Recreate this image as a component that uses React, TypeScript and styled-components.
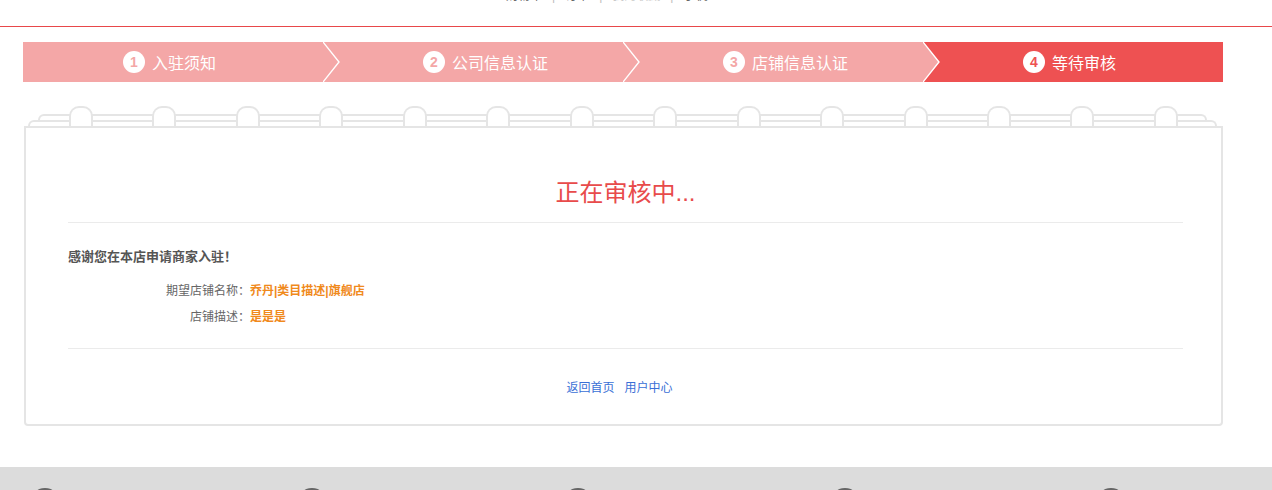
import React from "react";
import styled, { createGlobalStyle } from "styled-components";

const GlobalStyle = createGlobalStyle`
  body {
    margin: 0;
    background: #fff;
    font-family: "Liberation Sans", "Noto Sans CJK SC", sans-serif;
    overflow: hidden;
  }
`;

const TopBar = styled.div`
  height: 26px;
  border-bottom: 1px solid #e8474a;
  overflow: hidden;
`;
const TopNav = styled.div`
  display: flex;
  align-items: center;
  margin-top: -11px;
  padding-left: 506px;
  font-size: 12px;
  line-height: 14px;
  color: #666;
`;
const TopNavItem = styled.span<{ $light?: boolean }>`
  color: ${({ $light }) => ($light ? "#c9c9c9" : "#666")};
`;
const TopNavSep = styled.span`
  margin: 0 10px;
  color: #bbb;
`;

const Steps = styled.div`
  display: flex;
  width: 1200px;
  margin: 15px 0 0 23px;
  height: 40px;
`;
const Step = styled.div<{ $active?: boolean }>`
  position: relative;
  flex: 0 0 300px;
  display: flex;
  align-items: center;
  padding-left: 100px;
  box-sizing: border-box;
  background: ${({ $active }) => ($active ? "#ee5152" : "#f4a7a7")};
  color: #fff;
  font-size: 16px;
`;
const StepNum = styled.span<{ $active?: boolean }>`
  width: 22px;
  height: 22px;
  border-radius: 50%;
  background: #fff;
  color: ${({ $active }) => ($active ? "#ee5152" : "#f4a7a7")};
  font-size: 14px;
  font-weight: bold;
  display: flex;
  align-items: center;
  justify-content: center;
  margin-right: 7px;
`;
const Arrow = styled.svg`
  position: absolute;
  top: 0;
  right: -17px;
  width: 17px;
  height: 40px;
  z-index: 1;
`;

const CardWrap = styled.div`
  width: 1199px;
  margin: 24px 0 0 24px;
`;
const Binder = styled.div`
  position: relative;
  padding-top: 8px;
`;
const Sheet = styled.div<{ $l: number; $r: number }>`
  height: 6px;
  margin: 0 ${({ $r }) => $r}px 0 ${({ $l }) => $l}px;
  border: 2px solid #e5e5e5;
  border-bottom: none;
  border-radius: 6px 6px 0 0;
  box-sizing: border-box;
`;
const Rings = styled.div`
  position: absolute;
  top: 0;
  left: 0;
  right: 0;
  display: flex;
  justify-content: space-between;
  padding: 0 45px;
`;
const Ring = styled.div`
  width: 24px;
  height: 20px;
  box-sizing: border-box;
  border: 2px solid #e5e5e5;
  border-bottom: none;
  border-radius: 10px 10px 0 0;
  background: #fff;
`;
const Card = styled.div`
  border: 2px solid #e5e5e5;
  border-radius: 0 0 4px 4px;
  padding: 50px 38px 26px 42px;
`;
const Title = styled.div`
  text-align: center;
  font-size: 24px;
  line-height: 30px;
  color: #e84b4b;
  margin-bottom: 14px;
`;
const Divider = styled.div`
  height: 1px;
  background: #ebebeb;
`;
const Thanks = styled.div`
  margin-top: 24px;
  font-size: 13px;
  line-height: 20px;
  font-weight: bold;
  color: #555;
`;
const InfoList = styled.div`
  margin: 14px 0 21px;
  display: flex;
  flex-direction: column;
  gap: 6px;
`;
const InfoRow = styled.div`
  display: flex;
  font-size: 12px;
  line-height: 20px;
`;
const InfoLabel = styled.span`
  width: 182px;
  text-align: right;
  color: #666;
`;
const InfoValue = styled.span`
  color: #f08a1c;
  font-weight: bold;
`;
const Links = styled.div`
  margin-top: 29px;
  display: flex;
  justify-content: center;
  gap: 10px;
  font-size: 12px;
  line-height: 20px;
  padding-right: 12px;
`;
const Link = styled.a`
  color: #3a6fd6;
  text-decoration: none;
`;

const Footer = styled.div`
  margin-top: 41px;
  height: 120px;
  background: #dcdcdc;
  display: flex;
  padding: 21px 0 0 30px;
  box-sizing: border-box;
  overflow: hidden;
`;
const FooterItem = styled.div`
  flex: 0 0 266.5px;
`;
const FooterIcon = styled.div`
  width: 30px;
  height: 30px;
  border-radius: 50%;
  border: 2px solid #666;
  box-sizing: border-box;
`;

const steps = ["入驻须知", "公司信息认证", "店铺信息认证", "等待审核"];

export default function App() {
  return (
    <>
      <GlobalStyle />
      <TopBar>
        <TopNav>
          <TopNavItem>购物车</TopNavItem>
          <TopNavSep>|</TopNavSep>
          <TopNavItem>订单</TopNavItem>
          <TopNavSep>|</TopNavSep>
          <TopNavItem $light>我的收藏</TopNavItem>
          <TopNavSep>|</TopNavSep>
          <TopNavItem>手机</TopNavItem>
        </TopNav>
      </TopBar>

      <Steps>
        {steps.map((s, i) => {
          const active = i === steps.length - 1;
          return (
            <Step key={s} $active={active}>
              <StepNum $active={active}>{i + 1}</StepNum>
              {s}
              {!active && (
                <Arrow viewBox="0 0 17 40">
                  <polygon points="0,0 16,20 0,40" fill="#f4a7a7" />
                  <polyline
                    points="0,0 16,20 0,40"
                    fill="none"
                    stroke="#fff"
                    strokeWidth="1.4"
                  />
                </Arrow>
              )}
            </Step>
          );
        })}
      </Steps>

      <CardWrap>
        <Binder>
          <Sheet $l={14} $r={16} />
          <Sheet $l={4} $r={6} />
          <Rings>
            {Array.from({ length: 14 }).map((_, i) => (
              <Ring key={i} />
            ))}
          </Rings>
        </Binder>
        <Card>
          <Title>正在审核中...</Title>
          <Divider />
          <Thanks>感谢您在本店申请商家入驻！</Thanks>
          <InfoList>
            <InfoRow>
              <InfoLabel>期望店铺名称：</InfoLabel>
              <InfoValue>乔丹|类目描述|旗舰店</InfoValue>
            </InfoRow>
            <InfoRow>
              <InfoLabel>店铺描述：</InfoLabel>
              <InfoValue>是是是</InfoValue>
            </InfoRow>
          </InfoList>
          <Divider />
          <Links>
            <Link href="#">返回首页</Link>
            <Link href="#">用户中心</Link>
          </Links>
        </Card>
      </CardWrap>

      <Footer>
        {Array.from({ length: 5 }).map((_, i) => (
          <FooterItem key={i}>
            <FooterIcon />
          </FooterItem>
        ))}
      </Footer>
    </>
  );
}
